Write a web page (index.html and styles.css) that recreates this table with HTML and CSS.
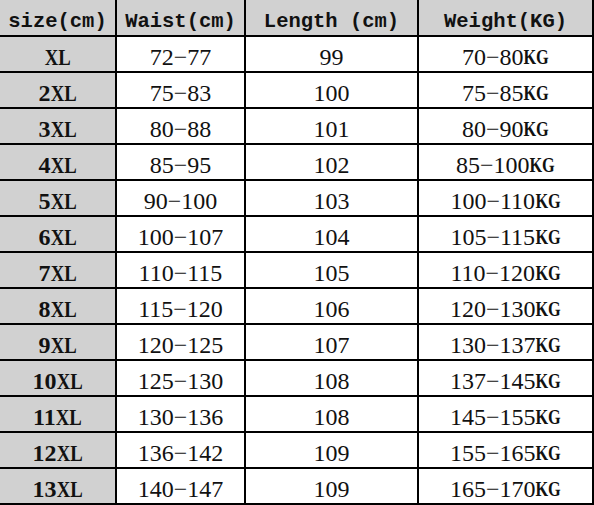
FILE: index.html
```html
<!DOCTYPE html>
<html>
<head>
<meta charset="utf-8">
<link rel="stylesheet" href="styles.css">
</head>
<body>
<div class="sheet">
  <div class="cell head">size(cm)</div>
  <div class="cell head">Waist(cm)</div>
  <div class="cell head">Length (cm)</div>
  <div class="cell head">Weight(KG)</div>

  <div class="cell size"><span class="lt">XL</span></div><div class="cell">72−77</div><div class="cell">99</div><div class="cell">70−80<span class="kg">KG</span></div>
  <div class="cell size">2<span class="lt">XL</span></div><div class="cell">75−83</div><div class="cell">100</div><div class="cell">75−85<span class="kg">KG</span></div>
  <div class="cell size">3<span class="lt">XL</span></div><div class="cell">80−88</div><div class="cell">101</div><div class="cell">80−90<span class="kg">KG</span></div>
  <div class="cell size">4<span class="lt">XL</span></div><div class="cell">85−95</div><div class="cell">102</div><div class="cell">85−100<span class="kg">KG</span></div>
  <div class="cell size">5<span class="lt">XL</span></div><div class="cell">90−100</div><div class="cell">103</div><div class="cell">100−110<span class="kg">KG</span></div>
  <div class="cell size">6<span class="lt">XL</span></div><div class="cell">100−107</div><div class="cell">104</div><div class="cell">105−115<span class="kg">KG</span></div>
  <div class="cell size">7<span class="lt">XL</span></div><div class="cell">110−115</div><div class="cell">105</div><div class="cell">110−120<span class="kg">KG</span></div>
  <div class="cell size">8<span class="lt">XL</span></div><div class="cell">115−120</div><div class="cell">106</div><div class="cell">120−130<span class="kg">KG</span></div>
  <div class="cell size">9<span class="lt">XL</span></div><div class="cell">120−125</div><div class="cell">107</div><div class="cell">130−137<span class="kg">KG</span></div>
  <div class="cell size">10<span class="lt">XL</span></div><div class="cell">125−130</div><div class="cell">108</div><div class="cell">137−145<span class="kg">KG</span></div>
  <div class="cell size">11<span class="lt">XL</span></div><div class="cell">130−136</div><div class="cell">108</div><div class="cell">145−155<span class="kg">KG</span></div>
  <div class="cell size">12<span class="lt">XL</span></div><div class="cell">136−142</div><div class="cell">109</div><div class="cell">155−165<span class="kg">KG</span></div>
  <div class="cell size">13<span class="lt">XL</span></div><div class="cell">140−147</div><div class="cell">109</div><div class="cell">165−170<span class="kg">KG</span></div>
</div>
</body>
</html>
```
FILE: styles.css
```css
html, body {
  margin: 0;
  padding: 0;
  background: #ffffff;
}

.sheet {
  display: grid;
  grid-template-columns: 115px 127px 171px 173px;
  grid-template-rows: 35px repeat(13, 34px);
  gap: 2px;
  padding: 0 2px 2px 0;
  width: 594px;
  box-sizing: border-box;
  background: #000000;
}

.cell {
  display: flex;
  align-items: center;
  justify-content: center;
  background: #ffffff;
  color: #111111;
  font-family: "Liberation Serif", "Times New Roman", serif;
  font-size: 24px;
  line-height: 1;
  padding-top: 5px;
  box-sizing: border-box;
  white-space: pre;
}

.head {
  background: #d1d1d1;
  font-family: "Liberation Mono", "Courier New", monospace;
  font-weight: bold;
  font-size: 20.5px;
  padding-top: 9px;
}

.size {
  background: #d1d1d1;
  font-weight: bold;
}

.lt {
  display: inline-block;
  font-weight: bold;
  transform: scaleX(0.78);
  margin: 0 -0.15em;
}

.kg {
  display: inline-block;
  font-weight: bold;
  font-size: 22px;
  transform: scaleX(0.74);
  margin: 0 -0.2em;
}
```
